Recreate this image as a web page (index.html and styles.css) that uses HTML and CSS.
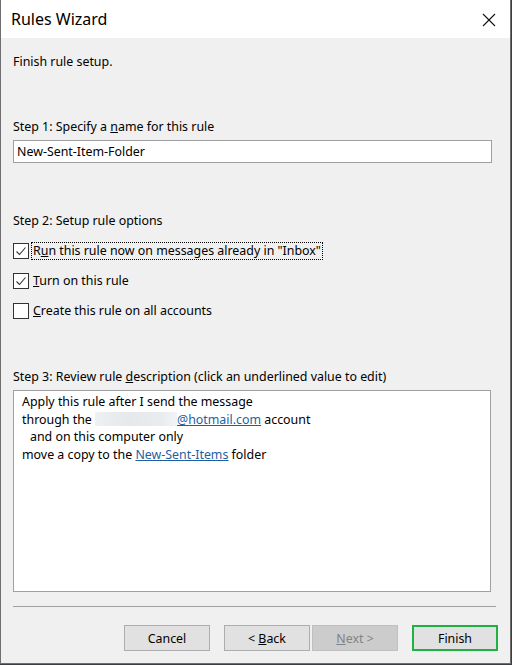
FILE: index.html
```html
<!DOCTYPE html>
<html lang="en">
<head>
  <meta charset="UTF-8">
  <title>Rules Wizard</title>
  <link rel="stylesheet" href="styles.css">
</head>
<body>
  <div class="window">
    <div class="titlebar">
      <span class="title">Rules Wizard</span>
      <svg class="close" width="14" height="14" viewBox="0 0 14 14"><path d="M1 1L13 13M13 1L1 13" stroke="#111" stroke-width="1.1" fill="none"/></svg>
    </div>
    <div class="content">
      <div class="intro">Finish rule setup.</div>

      <div class="step step1">Step 1: Specify a <u>n</u>ame for this rule</div>
      <div class="name-box">New-Sent-Item-Folder</div>

      <div class="step step2">Step 2: Setup rule options</div>
      <div class="options">
        <div class="option">
          <span class="check on"><svg width="12" height="12" viewBox="0 0 12 12"><path d="M1.5 6.5L4.5 9.5L10.5 2.5" stroke="#333" stroke-width="1.1" fill="none"/></svg></span>
          <span class="label focused">R<u>u</u>n this rule now on messages already in "Inbox"</span>
        </div>
        <div class="option">
          <span class="check on"><svg width="12" height="12" viewBox="0 0 12 12"><path d="M1.5 6.5L4.5 9.5L10.5 2.5" stroke="#333" stroke-width="1.1" fill="none"/></svg></span>
          <span class="label"><u>T</u>urn on this rule</span>
        </div>
        <div class="option">
          <span class="check"></span>
          <span class="label"><u>C</u>reate this rule on all accounts</span>
        </div>
      </div>

      <div class="step step3">Step 3: Review rule <u>d</u>escription (click an underlined value to edit)</div>
      <div class="desc">
        <div>Apply this rule after I send the message</div>
        <div>through the <span class="blur"></span><a class="val">@hotmail.com</a> account</div>
        <div class="indent">and on this computer only</div>
        <div>move a copy to the <a class="val">New-Sent-Items</a> folder</div>
      </div>

      <div class="separator"></div>

      <div class="buttons">
        <button class="btn">Cancel</button>
        <button class="btn back">&lt; <u>B</u>ack</button>
        <button class="btn disabled"><u>N</u>ext &gt;</button>
        <button class="btn finish">Finish</button>
      </div>
    </div>
  </div>
</body>
</html>
```

FILE: styles.css
```css
html, body { margin: 0; padding: 0; background: #3b3f44; }
body { font-family: "Noto Sans", "Open Sans", sans-serif; font-size: 12.4px; color: #000; }
.window { width: 509px; height: 663px; background: #f0f0f0; border: 1px solid #6e6e6e; border-top: 0; display: flex; flex-direction: column; }
.titlebar { height: 38px; background: #fff; display: flex; align-items: center; justify-content: space-between; padding: 0 14px 0 10px; }
.title { font-size: 16px; line-height: 20px; }
.close { margin-top: 1px; }
.content { flex: 1; display: flex; flex-direction: column; padding: 0 12px; }
.intro { margin-top: 16px; line-height: 16px; }
.step { line-height: 16px; }
.step1 { margin-top: 49px; }
.name-box { margin-top: 5px; width: 474px; height: 21px; border: 1px solid #a0a0a0; background: #fff; line-height: 21px; padding-left: 3px; }
.step2 { margin-top: 50px; }
.options { margin-top: 14px; display: flex; flex-direction: column; gap: 14px; }
.option { display: flex; align-items: center; height: 16px; }
.check { width: 14px; height: 14px; border: 1px solid #333; background: #fff; display: flex; align-items: center; justify-content: center; }
.label { margin-left: 3px; line-height: 16px; padding: 0 1px; }
.focused { outline: 1px dotted #000; outline-offset: 0; }
.step3 { margin-top: 50px; }
.desc { margin-top: 5px; width: 468px; height: 198px; border: 1px solid #a0a0a0; background: #fff; padding: 2px 0 0 8px; line-height: 17.7px; }
.indent { padding-left: 8px; }
.blur { display: inline-block; width: 82px; height: 14px; vertical-align: -2px; background: linear-gradient(90deg, #eef0f2, #e6e9ec 40%, #e9ecef 80%, #f2f3f4); }
.val { color: #1e5fa3; text-decoration: underline; }
.separator { margin-top: 14px; width: 483px; height: 1px; background: #a0a0a0; }
.buttons { margin-top: 18px; display: flex; justify-content: flex-end; }
.btn { width: 86px; height: 26px; font: inherit; background: #e1e1e1; border: 1px solid #adadad; padding: 0; color: #000; }
.back { margin-left: 14px; }
.disabled { margin-left: 2px; background: #cccccc; border-color: #bfbfbf; color: #838383; }
.finish { margin-left: 14px; border: 2px solid #1fb141; }
```
